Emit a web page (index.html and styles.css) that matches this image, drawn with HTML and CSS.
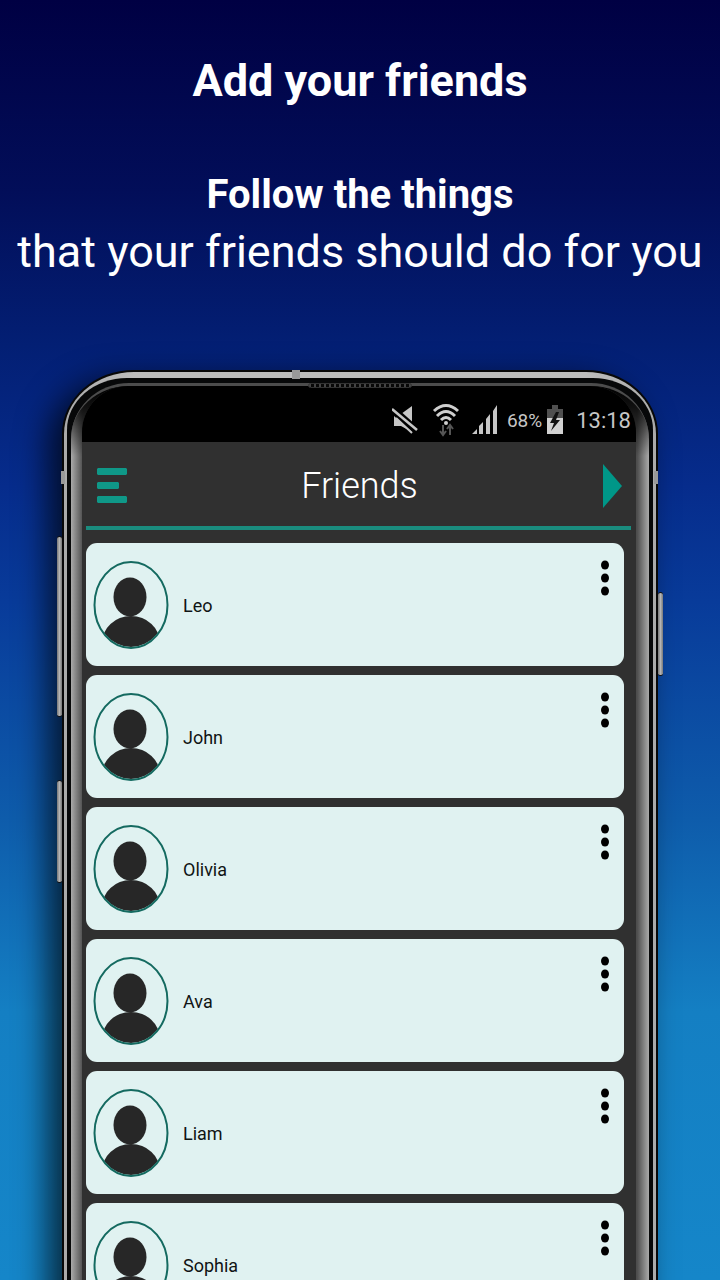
FILE: index.html
```html
<!DOCTYPE html>
<html lang="en">
<head>
<meta charset="utf-8">
<meta name="viewport" content="width=device-width, initial-scale=1">
<title>Friends</title>
<link rel="stylesheet" href="styles.css">
</head>
<body>
<main class="page">
  <section class="promo">
    <h1 class="promo-title">Add your friends</h1>
    <p class="promo-lead">Follow the things</p>
    <p class="promo-text">that your friends should do for you</p>
  </section>

  <section class="phone">
    <span class="side-button volume-up"></span>
    <span class="side-button volume-down"></span>
    <span class="side-button power"></span>
    <span class="antenna antenna-top"></span>
    <span class="antenna antenna-left"></span>
    <span class="antenna antenna-right"></span>
    <div class="rim">
      <div class="bezel">
        <span class="speaker"></span>
        <div class="glass">
          <div class="screen">
            <div class="status">
              <svg class="status-mute" width="26" height="28" viewBox="0 0 26 28" aria-hidden="true">
                <path d="M2 8h7L20 0v26L9 20H2z" fill="#c6c6c6"/>
                <path d="M0 3l26 23" stroke="#000" stroke-width="8"/>
                <path d="M0 3l25 21" stroke="#c6c6c6" stroke-width="2.500"/>
                <path d="M4 12l16 15" stroke="#c6c6c6" stroke-width="2"/>
              </svg>
              <svg class="status-wifi" width="28" height="34" viewBox="0 0 28 34" aria-hidden="true">
                <g fill="none" stroke="#cfcfcf" stroke-width="3">
                  <path d="M2 8Q14-3 26 8"/><path d="M5 13q9-9 18 0"/><path d="M9 17q5-5 10 0"/>
                </g>
                <circle cx="14" cy="20" r="2" fill="#cfcfcf"/>
                <path d="M11 22v10M8 28l3 4 3-4M18 32V22M15 26l3-4 3 4" fill="none" stroke="#555" stroke-width="2"/>
              </svg>
              <svg class="status-signal" width="26" height="30" viewBox="0 0 26 30" aria-hidden="true">
                <path d="M0 29l5-5v5zM7 29v-8l4-4v12zM14 29V14l4-5v20zM21 29V6l4-6v29z" fill="#c6c6c6"/>
              </svg>
              <span class="status-percent">68%</span>
              <svg class="status-battery" width="16" height="30" viewBox="0 0 16 30" aria-hidden="true">
                <path d="M0 4h5V0h6v4h5v9H0z" fill="#505050"/>
                <path d="M0 13h16v16H0z" fill="#d2d2d2"/>
                <path d="M9 7L3 18h4L4 26l9-11H9l3-8z" fill="#111"/>
              </svg>
              <time class="status-time">13:18</time>
            </div>

            <header class="bar">
              <button class="icon-button" type="button" aria-label="Menu">
                <svg width="30" height="36" viewBox="0 0 30 36"><path d="M1 0h28l1 1v5l-1 1H1L0 6V1zM1 14h20l1 1v5l-1 1H1l-1-1v-5zM1 28h28l1 1v5l-1 1H1l-1-1v-5z" fill="#0f9888"/></svg>
              </button>
              <h2 class="bar-title">Friends</h2>
              <button class="icon-button" type="button" aria-label="Next">
                <svg width="19" height="44" viewBox="0 0 19 44"><path d="M0 0l19 22L0 44z" fill="#009788"/></svg>
              </button>
            </header>

            <svg class="symbols" aria-hidden="true">
              <symbol id="person" viewBox="0 0 76 88">
                <clipPath id="face"><ellipse cx="38" cy="44" rx="36" ry="42"/></clipPath>
                <g clip-path="url(#face)" fill="#272727">
                  <ellipse cx="37" cy="36" rx="16.500" ry="19.500"/>
                  <ellipse cx="38" cy="82" rx="29" ry="27"/>
                </g>
                <ellipse cx="38" cy="44" rx="36.500" ry="43" fill="none" stroke="#146a60" stroke-width="2"/>
              </symbol>
              <symbol id="dots" viewBox="0 0 8 36">
                <g fill="#000"><ellipse cx="4" cy="5" rx="4" ry="4.500"/><ellipse cx="4" cy="18" rx="4" ry="4.500"/><ellipse cx="4" cy="31" rx="4" ry="4.500"/></g>
              </symbol>
            </svg>

            <ul class="friends">
              <li class="friend"><svg class="avatar" aria-hidden="true"><use href="#person"/></svg><span class="name">Leo</span><button class="more" type="button" aria-label="Options for Leo"><svg class="dots"><use href="#dots"/></svg></button></li>
              <li class="friend"><svg class="avatar" aria-hidden="true"><use href="#person"/></svg><span class="name">John</span><button class="more" type="button" aria-label="Options for John"><svg class="dots"><use href="#dots"/></svg></button></li>
              <li class="friend"><svg class="avatar" aria-hidden="true"><use href="#person"/></svg><span class="name">Olivia</span><button class="more" type="button" aria-label="Options for Olivia"><svg class="dots"><use href="#dots"/></svg></button></li>
              <li class="friend"><svg class="avatar" aria-hidden="true"><use href="#person"/></svg><span class="name">Ava</span><button class="more" type="button" aria-label="Options for Ava"><svg class="dots"><use href="#dots"/></svg></button></li>
              <li class="friend"><svg class="avatar" aria-hidden="true"><use href="#person"/></svg><span class="name">Liam</span><button class="more" type="button" aria-label="Options for Liam"><svg class="dots"><use href="#dots"/></svg></button></li>
              <li class="friend"><svg class="avatar" aria-hidden="true"><use href="#person"/></svg><span class="name">Sophia</span><button class="more" type="button" aria-label="Options for Sophia"><svg class="dots"><use href="#dots"/></svg></button></li>
            </ul>
          </div>
        </div>
      </div>
    </div>
  </section>
</main>
</body>
</html>
```

FILE: styles.css
```css
* { box-sizing: border-box; }
body { margin: 0; font-family: Roboto, "Noto Sans", sans-serif; }
h1, h2, p, ul { margin: 0; padding: 0; }
button { padding: 0; border: 0; background: none; cursor: pointer; }
svg { display: block; }

.page {
  height: 100vh;
  overflow: hidden;
  background: linear-gradient(#000043 0%, #020e59 15%, #031f74 27%, #062c8c 38%, #083b9a 47%, #0e5cab 64%, #147fc3 79%, #1586c9 100%);
}
.promo { padding-top: 52px; color: #fff; text-align: center; }
.promo-title { font-size: 45px; line-height: 58px; font-weight: 700; }
.promo-lead { margin-top: 56px; font-size: 40px; line-height: 58px; font-weight: 700; }
.promo-text { font-size: 45px; line-height: 56px; white-space: nowrap; }

.phone {
  position: relative;
  margin: 90px 62px 0;
  padding: 2px 2px 0;
  border-radius: 72px 72px 0 0 / 64px 64px 0 0;
  background: #080808;
  box-shadow: -14px 10px 32px rgba(0, 0, 0, .7);
}
.rim {
  padding: 6px 3px 0;
  border-radius: 70px 70px 0 0 / 62px 62px 0 0;
  background: linear-gradient(90deg, #aaa, #bdbdbd 12%, #bdbdbd 88%, #aaa);
}
.bezel {
  position: relative;
  padding: 5px 4px 0;
  border-radius: 60px 60px 0 0 / 52px 52px 0 0;
  background: #070809;
}
.glass {
  border-top: 3px solid #4c4c4c;
  border-radius: 58px 58px 0 0 / 56px 56px 0 0;
  background:
    linear-gradient(#000, rgba(0, 0, 0, .8) 20px, transparent 70px),
    linear-gradient(90deg, #aaa, #4d4d4d 12px, #4d4d4d calc(100% - 12px), #aaa);
}
.screen { margin: 0 13px 0 11px; border-radius: 46px 46px 0 0; background: #303030; }

.speaker {
  position: absolute;
  top: 5px;
  left: 50%;
  width: 104px;
  height: 5px;
  margin-left: -52px;
  border: 1px solid #333;
  border-radius: 3px;
  background: repeating-linear-gradient(90deg, #444 0 2px, #080808 2px 5px);
}
.side-button {
  position: absolute;
  width: 5px;
  border: 1px solid #111;
  border-width: 1px 0;
  border-radius: 3px;
  background: linear-gradient(90deg, #777, #b5b5b5, #777);
}
.volume-up { top: 166px; left: -5px; height: 181px; }
.volume-down { top: 410px; left: -5px; height: 103px; }
.power { top: 222px; right: -5px; height: 84px; }
.antenna { position: absolute; background: #999; }
.antenna-top { z-index: 1; top: 0; left: 230px; width: 8px; height: 9px; }
.antenna-left { top: 101px; left: -1px; width: 4px; height: 13px; }
.antenna-right { top: 101px; right: 0; width: 4px; height: 13px; }

.status {
  display: flex;
  align-items: center;
  justify-content: flex-end;
  height: 56px;
  padding: 12px 5px 0 0;
  border-radius: 46px 46px 0 0;
  background: #000;
  color: #c6c6c6;
}
.status-mute { margin-right: 14px; }
.status-wifi { margin-right: 12px; }
.status-signal { margin-right: 9px; }
.status-percent { margin-right: 5px; font-size: 19px; }
.status-battery { margin-right: 13px; }
.status-time { font-size: 22px; }

.bar {
  display: flex;
  align-items: center;
  justify-content: space-between;
  height: 88px;
  margin: 0 5px 0 4px;
  padding: 4px 9px 0 11px;
  border-bottom: 4px solid #1a8c7e;
}
.icon-button { display: flex; width: 30px; }
.icon-button:last-child { justify-content: flex-end; }
.bar-title { color: #fff; font-size: 36px; line-height: 44px; font-weight: 300; }
.symbols { position: absolute; width: 0; height: 0; }

.friends {
  display: flex;
  flex-direction: column;
  gap: 9px;
  padding: 13px 12px 9px 4px;
  list-style: none;
}
.friend {
  display: flex;
  align-items: center;
  gap: 14px;
  height: 123px;
  padding: 0 15px 0 7px;
  border-radius: 11px;
  background: #e0f2f1;
}
.avatar { width: 76px; height: 88px; }
.name { flex: 1; color: #101414; font-size: 18px; line-height: 24px; padding-top: 2px; }
.more { align-self: flex-start; padding-top: 17px; }
.dots { width: 8px; height: 36px; }
```
